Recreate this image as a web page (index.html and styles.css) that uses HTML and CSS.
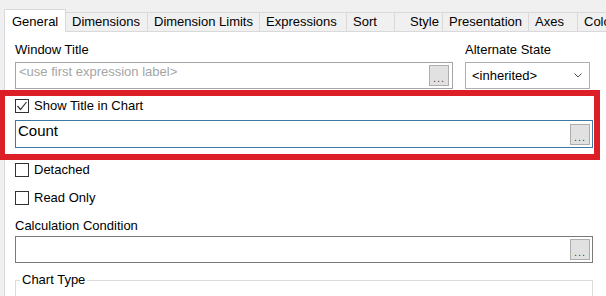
FILE: index.html
```html
<!DOCTYPE html>
<html lang="en">
<head>
    <meta charset="UTF-8">
    <meta name="viewport" content="width=device-width, initial-scale=1.0">
    <title>Chart Properties</title>
    <link rel="stylesheet" href="styles.css">
</head>
<body>
    <div class="tabs">
        <div class="tab active" style="width: 62px">General</div>
        <div class="tab" style="width: 82px">Dimensions</div>
        <div class="tab" style="width: 112px">Dimension Limits</div>
        <div class="tab" style="width: 87px">Expressions</div>
        <div class="tab" style="width: 48px">Sort</div>
        <div class="tab tab-wide" style="width: 48px">Style</div>
        <div class="tab" style="width: 86px">Presentation</div>
        <div class="tab" style="width: 49px">Axes</div>
        <div class="tab" style="width: 60px">Colors</div>
    </div>

    <div class="panel">
        <div class="top-row">
            <div class="field field-title">
                <label>Window Title</label>
                <div class="input">
                    <span class="input-text placeholder">&lt;use first expression label&gt;</span>
                    <span class="dots">...</span>
                </div>
            </div>
            <div class="field field-state">
                <label>Alternate State</label>
                <div class="select">
                    <span>&lt;inherited&gt;</span>
                    <svg width="8" height="5" viewBox="0 0 8 5"><path d="M0.5 0.5 L4 4 L7.5 0.5" fill="none" stroke="#555" stroke-width="1"/></svg>
                </div>
            </div>
        </div>

        <div class="check-row show-title">
            <span class="box"><svg width="12" height="12" viewBox="0 0 12 12"><path d="M1.5 6 L4.5 9.5 L10.5 2" fill="none" stroke="#333" stroke-width="1.2"/></svg></span>
            <span>Show Title in Chart</span>
        </div>
        <div class="input input-focus">
            <span class="input-text big">Count</span>
            <span class="dots">...</span>
        </div>

        <div class="check-row detached">
            <span class="box"></span>
            <span>Detached</span>
        </div>
        <div class="check-row read-only">
            <span class="box"></span>
            <span>Read Only</span>
        </div>

        <label class="calc-label">Calculation Condition</label>
        <div class="input input-dark">
            <span class="input-text"></span>
            <span class="dots">...</span>
        </div>

        <fieldset class="group">
            <legend>Chart Type</legend>
        </fieldset>
    </div>

    <div class="highlight"></div>
</body>
</html>
```

FILE: styles.css
```css
body {
    margin: 0;
    width: 606px;
    height: 296px;
    overflow: hidden;
    position: relative;
    background-color: #f0f0f0;
    font-family: "Liberation Sans", Arial, sans-serif;
    font-size: 13px;
    color: #000;
}
.tabs {
    display: flex;
    align-items: flex-end;
    height: 23px;
    padding: 9px 0 0 4px;
    white-space: nowrap;
    overflow: hidden;
}
.tab {
    box-sizing: border-box;
    flex-shrink: 0;
    height: 20px;
    padding: 0 0 0 6px;
    line-height: 18px;
    background-color: #f0f0f0;
    border: 1px solid #d9d9d9;
    border-left: none;
    overflow: hidden;
}
.tab.active {
    height: 23px;
    padding: 3px 0 0 7px;
    background-color: #fff;
    border-left: 1px solid #d9d9d9;
    border-bottom: none;
}
.tab-wide {
    padding-left: 15px;
}
.panel {
    box-sizing: border-box;
    height: 264px;
    margin-left: 4px;
    padding: 10px 13px 0 10px;
    background-color: #fff;
    border-left: 1px solid #d9d9d9;
    overflow: hidden;
}
.top-row {
    display: flex;
    gap: 12px;
}
.field-title {
    width: 438px;
}
.field-state {
    width: 125px;
}
label {
    display: block;
    line-height: 16px;
    margin-bottom: 4px;
}
.input {
    box-sizing: border-box;
    display: flex;
    align-items: flex-start;
    height: 27px;
    padding: 0 3px 0 3px;
    border: 1px solid #a5a5a5;
    background-color: #fff;
}
.input-text {
    flex: 1;
    padding-top: 1px;
    line-height: 16px;
}
.placeholder {
    color: #a5a5a5;
}
.dots {
    box-sizing: border-box;
    align-self: center;
    width: 20px;
    height: 21px;
    padding-top: 5px;
    text-align: center;
    font-size: 11px;
    line-height: 14px;
    letter-spacing: 1px;
    color: #444;
    background-color: #e1e1e1;
    border: 1px solid #adadad;
}
.select {
    box-sizing: border-box;
    display: flex;
    align-items: center;
    justify-content: space-between;
    height: 27px;
    padding: 0 7px 0 6px;
    border: 1px solid #adadad;
    background-color: #fff;
}
.check-row {
    display: flex;
    align-items: center;
    gap: 5px;
    height: 16px;
    line-height: 16px;
}
.box {
    box-sizing: border-box;
    display: flex;
    align-items: center;
    justify-content: center;
    width: 14px;
    height: 14px;
    border: 1px solid #333;
    background-color: #fff;
}
.show-title {
    margin-top: 9px;
}
.input-focus {
    height: 28px;
    margin-top: 6px;
    padding: 0 2px 0 2px;
    border-color: #3a7aa0;
}
.big {
    font-size: 15px;
    line-height: 18px;
}
.detached {
    margin-top: 14px;
}
.read-only {
    margin-top: 12px;
}
.calc-label {
    margin-top: 12px;
    margin-bottom: 2px;
}
.input-dark {
    padding-right: 2px;
    border-color: #7a7a7a;
}
.group {
    height: 24px;
    margin: 9px 0 0 0;
    padding: 0;
    border: 1px solid #dcdcdc;
    border-bottom: none;
}
.group legend {
    margin-left: 4px;
    padding: 0 2px;
    line-height: 16px;
}
.highlight {
    position: absolute;
    left: 0;
    top: 90px;
    box-sizing: border-box;
    width: 600px;
    height: 70px;
    border: 6px solid #dc1f26;
    border-left-width: 5px;
}
```
